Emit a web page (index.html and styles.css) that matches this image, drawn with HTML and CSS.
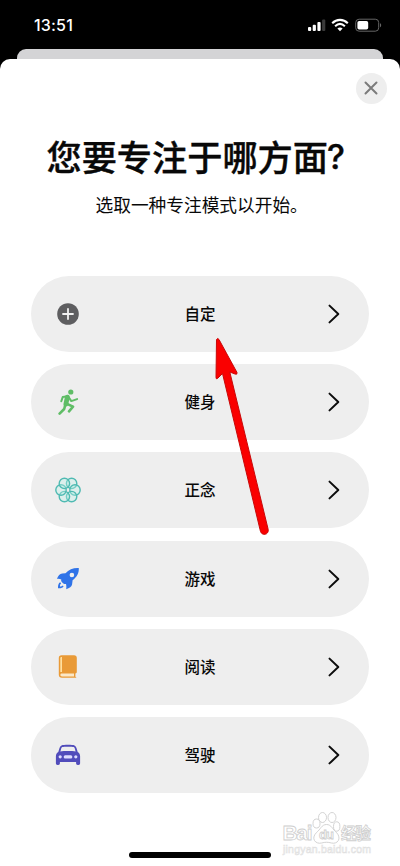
FILE: index.html
```
<!DOCTYPE html>
<html lang="zh-CN">
<head>
<meta charset="utf-8">
<meta name="viewport" content="width=device-width">
<title>专注模式</title>
<link rel="stylesheet" href="styles.css">
</head>
<body>
<div class="phone">
  <header class="status">
    <span class="time">13:51</span>
    <span class="indicators">
      <svg width="18" height="14" viewBox="0 0 18 14"><g fill="#fff"><rect x="0" y="9" width="3.2" height="4" rx="1"/><rect x="4.7" y="6.8" width="3.2" height="6.2" rx="1"/><rect x="9.4" y="4" width="3.2" height="9" rx="1"/><rect x="14.1" y="1.5" width="3.2" height="11.5" rx="1" fill="#3a3a3a"/></g></svg>
      <svg width="18" height="14" viewBox="0 0 18 14"><g fill="none" stroke="#fff" stroke-width="2.1"><path d="M1.2 5.2C5.7.8 12.3.8 16.8 5.2"/><path d="M4.1 8.2c3-2.8 6.8-2.8 9.8 0"/></g><path d="M9 13.2l-2.6-2.7c1.5-1.3 3.7-1.3 5.2 0z" fill="#fff"/></svg>
      <svg width="27" height="14" viewBox="0 0 27 14"><rect x=".7" y="1.2" width="23" height="12" rx="3.4" fill="none" stroke="#666"/><rect x="2.4" y="3" width="10.8" height="8.4" rx="1.7" fill="#fff"/><path d="M25 5.2c1.5.4 1.5 3.6 0 4z" fill="#666"/></svg>
    </span>
  </header>
  <div class="back-sheet"></div>
  <main class="sheet">
    <button class="close" aria-label="关闭"><svg width="14" height="14" viewBox="0 0 14 14"><path d="M1.5 1.5l11 11M12.5 1.5l-11 11" stroke="#7b7b7b" stroke-width="2" stroke-linecap="round"/></svg></button>
    <h1>您要专注于哪方面<span class="question">?</span></h1>
    <p class="subtitle">选取一种专注模式以开始。</p>
    <div class="list">
      <div class="row">
        <svg class="icon" viewBox="0 0 26 26"><circle cx="13" cy="13" r="10.8" fill="#5e5e60"/><path d="M8 13h10M13 8v10" stroke="#f2f2f2" stroke-width="1.8" stroke-linecap="round"/></svg>
        <span>自定</span>
        <svg class="chevron" viewBox="0 0 12 20"><path d="M1.5 1.6L10.3 10l-8.8 8.4"/></svg>
      </div>
      <div class="row">
        <svg class="icon" viewBox="0 0 26 26" fill="none" stroke="#5fbd66" stroke-linecap="round" stroke-linejoin="round"><circle cx="15.8" cy="3" r="2.6" fill="#5fbd66" stroke="none"/><path d="M12.3 8.2L10.9 15" stroke-width="4.8"/><path d="M12.8 7.2L7.7 8.1l-1.4 4.1M13.6 8l2.7 4.1 5.8-2" stroke-width="2"/><path d="M12 14.8l6 2.9-4 4.6M10.3 15.8L9.2 20l-4.6 4.6" stroke-width="2.6"/></svg>
        <span>健身</span>
        <svg class="chevron" viewBox="0 0 12 20"><path d="M1.5 1.6L10.3 10l-8.8 8.4"/></svg>
      </div>
      <div class="row">
        <svg class="icon" viewBox="0 0 26 26" fill="#b9f0e8" fill-opacity=".35" stroke="#4fbab2" stroke-width="1.4"><circle cx="16.6" cy="6.4" r="5.2"/><circle cx="20" cy="13" r="5.2"/><circle cx="16.6" cy="19.6" r="5.2"/><circle cx="9.400" cy="19.6" r="5.2"/><circle cx="6" cy="13" r="5.2"/><circle cx="9.400" cy="6.4" r="5.2"/></svg>
        <span>正念</span>
        <svg class="chevron" viewBox="0 0 12 20"><path d="M1.5 1.6L10.3 10l-8.8 8.4"/></svg>
      </div>
      <div class="row">
        <svg class="icon" viewBox="0 0 26 26" fill="#2f73e8"><path fill-rule="evenodd" d="M23.8 2.1C18.5 1.8 13.9 3.5 10.5 7.3L7.2 7.6C4.8 7.8 3.2 9.8 1.9 13c1.6-.3 3-.1 4.4.4-.5 1.4.2 2.4 1.2 3.3 1.1 1 2.3 1.8 3.5 1.2.4 1.6.5 3.2.2 5.3 3.3-1.1 5.5-2.6 5.9-5l.5-4c4.5-3.2 6.4-6.8 6.2-12.1zM16.900 6.7a2.3 2.3 0 1 1 0 4.6 2.3 2.3 0 0 1 0-4.6z"/><path d="M5.2 16.2c-1.7.9-2.3 2.8-2.2 6 3 .2 4.7-.4 5.6-2l-1-.8c-.6.8-1.4 1-2.6 1-.1-1.4.2-2.3 1.1-2.9z"/></svg>
        <span>游戏</span>
        <svg class="chevron" viewBox="0 0 12 20"><path d="M1.5 1.6L10.3 10l-8.8 8.4"/></svg>
      </div>
      <div class="row">
        <svg class="icon" viewBox="0 0 26 26"><path d="M6.5 1.3H19c1.8 0 2.8 1 2.8 2.7v13.7c0 1-.5 1.6-1.4 1.9v3.2c.7.2 1 .5 1 1H7c-2.1 0-3.2-1.2-3.2-3V4c0-1.7 1-2.7 2.7-2.7z" fill="#e99a37"/><path d="M5.3 4.2c0-.8.4-1.2 1.2-1.2H7v15.1H5.3z" fill="#ffe0a0"/><path d="M7 19.6h12v2.8H7c-1 0-1.6-.5-1.6-1.4S6 19.6 7 19.6z" fill="#fbe8c8"/></svg>
        <span>阅读</span>
        <svg class="chevron" viewBox="0 0 12 20"><path d="M1.5 1.6L10.3 10l-8.8 8.4"/></svg>
      </div>
      <div class="row">
        <svg class="icon" viewBox="0 0 26 26"><path fill="#514cbb" fill-rule="evenodd" d="M6.5 3.4C8.3 2.6 17.7 2.6 19.5 3.4c1 .4 1.5 1.4 2 2.7l1.2 3.8c1.6 1 2.4 2.2 2.4 4.3v7c0 1.2-.6 1.7-1.6 1.7h-.8c-1 0-1.6-.6-1.6-1.6v-1.2H4.9v1.2c0 1-.6 1.6-1.6 1.6h-.8c-1 0-1.6-.5-1.6-1.7v-7c0-2.1.8-3.3 2.4-4.3l1.2-3.8c.5-1.3 1-2.3 2-2.7zM7.3 5c-.5.2-.8.7-1.1 1.6l-.8 2.8c3.4-.6 11.8-.6 15.2 0l-.8-2.8C19.5 5.7 19.2 5.2 18.7 5c-1.4-.5-10-.5-11.4 0z"/><rect x="8.7" y="13.3" width="8.6" height="3.2" rx="1.5" fill="#dedcff"/><circle cx="5.2" cy="14.8" r="1.6" fill="#dedcff"/><circle cx="20.8" cy="14.8" r="1.6" fill="#dedcff"/></svg>
        <span>驾驶</span>
        <svg class="chevron" viewBox="0 0 12 20"><path d="M1.5 1.6L10.3 10l-8.8 8.4"/></svg>
      </div>
    </div>
  </main>
  <svg class="arrow" width="60" height="204" viewBox="0 0 60 204"><path d="M6.5 5.5Q7.5 3.500 9 5.5L27 38.5Q27.5 41 25 40L19.8 38 58.2 195.5C59 201 52 202 50.5 197.5L12.5 39.5 7.5 44.5Q6 45.5 6 43.5z" fill="#fa0000" stroke="#c80808"/></svg>
  <svg class="watermark" width="96" height="46" viewBox="0 0 96 46">
    <g fill="#fff" stroke="#cecece" stroke-width=".9"><ellipse cx="41.500" cy="6.500" rx="4" ry="5"/><ellipse cx="51" cy="6.500" rx="4" ry="5"/><ellipse cx="35.500" cy="12.500" rx="3.500" ry="4.500"/><ellipse cx="55.700" cy="15.500" rx="3.200" ry="4.700"/><path d="M45.500 13.500c5 0 6 5 10 8 5.500 6 1 12-5 10.500-4-1-6-1-10 0-6 1.500-11-4.500-5-10.500 4-3 5-8 10-8z"/></g>
    <text class="mark" x="1.5" y="29" textLength="30">Bai</text><text class="du" x="38" y="28" textLength="15">du</text><text class="cn" x="60" y="27.5" textLength="30">经验</text><text class="url" x="2" y="41.5" textLength="88">jingyan.baidu.com</text>
  </svg>
  <div class="home"></div>
</div>
</body>
</html>
```
FILE: styles.css
```
* { box-sizing: border-box; }
body { margin: 0; background: #fff; color: #080808; font-family: "Inter", "Noto Sans CJK SC", sans-serif; }
.phone { position: relative; width: 400px; height: 866px; overflow: hidden; display: flex; flex-direction: column; background: linear-gradient(#000 100px, #fff 100px); }
.status { flex: none; height: 48.5px; padding: 2px 18.5px 0 34px; display: flex; justify-content: space-between; align-items: center; color: #fff; }
.time { font-size: 16px; font-weight: 500; line-height: 20px; letter-spacing: .2px; }
.indicators { display: flex; gap: 5.5px; }
.back-sheet { flex: none; height: 10.5px; margin: 0 17px; background: #d4d4d6; border-radius: 9px 9px 0 0; }
.sheet { flex: 1; display: flex; flex-direction: column; background: #fff; border-radius: 10px 10px 0 0; }
.close { align-self: flex-end; width: 31px; height: 31px; margin: 13.5px 13.5px 0 0; padding: 0; border: 0; border-radius: 50%; background: #eee; display: grid; place-items: center; }
h1 { margin: 26.5px 0 0 46.5px; height: 52px; font-family: "Noto Sans CJK SC", sans-serif; font-size: 35.2px; line-height: 52px; font-weight: 500; -webkit-text-stroke: .4px #080808; white-space: nowrap; }
.question { display: inline-block; line-height: 1; font-family: "Inter", sans-serif; font-weight: 500; font-size: 34px; transform: translate(-1px, -2px); }
.subtitle { margin: 8.5px 0 0 95.5px; height: 26px; font-family: "Noto Sans CJK SC", sans-serif; font-size: 17.7px; line-height: 26px; white-space: nowrap; }
.list { margin: 59.5px 31px 0; display: flex; flex-direction: column; gap: 12.2px; }
.row { height: 76px; padding: 0 29px 0 24px; border-radius: 38px; background: #eee; display: grid; grid-template-columns: 26px 1fr 12px; align-items: center; text-align: center; font-size: 15.5px; font-weight: 500; font-family: "Noto Sans CJK SC", sans-serif; }
.row span { padding: 0 9px 2px 0; }
.icon { width: 26px; height: 26px; }
.chevron { width: 12px; height: 20px; fill: none; stroke: #0c0c0c; stroke-width: 2; stroke-linecap: round; stroke-linejoin: round; }
.arrow { position: absolute; left: 210px; top: 334px; }
.watermark { position: absolute; left: 281px; top: 811px; }
.watermark text { fill: #fff; stroke: #cecece; stroke-width: .8px; font-family: "Liberation Sans", "Noto Sans CJK SC", sans-serif; }
.watermark .mark { font-size: 21px; font-weight: 700; }
.watermark .du { font-size: 13px; font-weight: 700; }
.watermark .cn { font-size: 15.5px; font-weight: 700; }
.watermark .url { font-size: 10.5px; stroke: #e0e0e0; stroke-width: .6px; }
.home { position: absolute; left: 129px; top: 852px; width: 142px; height: 5.5px; border-radius: 3px; background: #000; }
```
